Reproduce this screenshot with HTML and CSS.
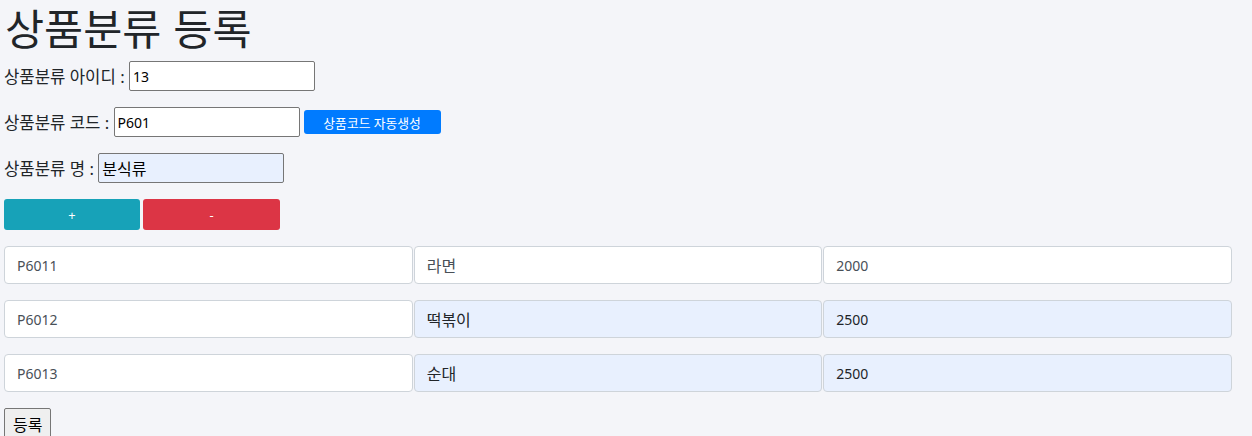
FILE: index.html
```html
<!DOCTYPE html>
<html lang="ko">
<head>
<meta charset="utf-8">
<link rel="stylesheet" href="styles.css">
</head>
<body>
<h1 class="title">상품분류 등록</h1>
<div class="field"><label class="lbl">상품분류 아이디 : </label><input class="plain" type="text" value="13"></div>
<div class="field"><label class="lbl">상품분류 코드 : </label><input class="plain" type="text" value="P601"><button class="btn btn-blue" type="button">상품코드 자동생성</button></div>
<div class="field"><label class="lbl">상품분류 명 : </label><input class="plain filled ko" type="text" value="분식류"></div>
<div class="actions"><button class="btn btn-teal" type="button">+</button><button class="btn btn-red" type="button">-</button></div>
<div class="rows">
  <div class="row"><input class="fc" type="text" value="P6011"><input class="fc ko" type="text" value="라면"><input class="fc" type="text" value="2000"></div>
  <div class="row"><input class="fc" type="text" value="P6012"><input class="fc filled dark ko" type="text" value="떡볶이"><input class="fc filled dark" type="text" value="2500"></div>
  <div class="row"><input class="fc" type="text" value="P6013"><input class="fc filled dark ko" type="text" value="순대"><input class="fc filled dark" type="text" value="2500"></div>
</div>
<button class="submit" type="button">등록</button>
</body>
</html>
```
FILE: styles.css
```css
html, body { margin: 0; padding: 0; }
body {
  background: #f4f5f9;
  font-family: "Noto Sans", "Noto Sans CJK KR", sans-serif;
  color: #212529;
  padding: 0 4px;
  overflow: hidden;
}
.title {
  font-family: "Noto Sans CJK KR", sans-serif;
  font-size: 42.5px;
  font-weight: 400;
  line-height: 62px;
  margin: -4px 0 3px 1px;
}
.field {
  display: flex;
  align-items: center;
  height: 30px;
  margin-bottom: 16px;
  font-size: 16.7px;
}
.lbl { white-space: pre; }
.plain {
  box-sizing: border-box;
  width: 186px;
  height: 30px;
  border: 1px solid #767676;
  border-radius: 2px;
  background: #fff;
  padding: 1px 3px;
  font-family: "Noto Sans", "Noto Sans CJK KR", sans-serif;
  font-size: 14px;
  color: #000;
  margin: 0;
}
.plain.filled { background: #e8f0fe; }
.plain.ko { font-size: 16px; }
.btn {
  border: none;
  border-radius: 3px;
  color: #fff;
  font-family: "Noto Sans", "Noto Sans CJK KR", sans-serif;
  font-size: 12.8px;
  margin: 0;
  padding: 0;
}
.btn-blue { background: #007bff; width: 137px; height: 24px; margin-left: 4px; }
.actions { display: flex; gap: 3px; margin-bottom: 16px; }
.btn-teal { background: #17a2b8; width: 136px; height: 31px; }
.btn-red { background: #dc3545; width: 137px; height: 31px; }
.rows { width: 1228px; }
.row { display: flex; gap: 1px; margin-bottom: 16px; }
.fc {
  box-sizing: border-box;
  flex: 1 1 0;
  min-width: 0;
  height: 38px;
  border: 1px solid #ced4da;
  border-radius: 4px;
  background: #fff;
  padding: 6px 12px;
  font-family: "Noto Sans", "Noto Sans CJK KR", sans-serif;
  font-size: 14px;
  color: #495057;
  margin: 0;
}
.fc.ko { font-size: 16px; }
.fc.filled { background: #e8f0fe; }
.fc.dark { color: #212529; }
.submit {
  border: 1px solid #767676;
  border-radius: 2px;
  background: #efefef;
  font-family: "Noto Sans", "Noto Sans CJK KR", sans-serif;
  font-size: 16px;
  padding: 0 8px;
  height: 32px;
  margin: 0;
  color: #000;
}
```
